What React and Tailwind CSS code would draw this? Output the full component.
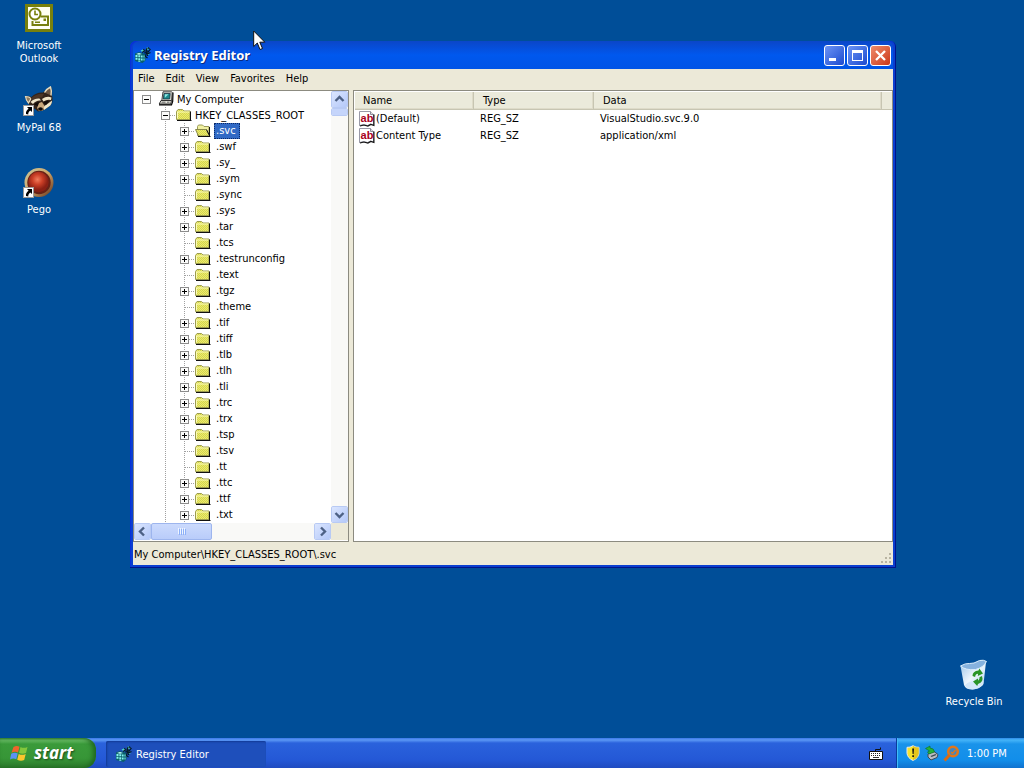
import React from "react";

const tree = [
  [".svc", true], [".swf", true], [".sy_", true], [".sym", true], [".sync", false],
  [".sys", true], [".tar", true], [".tcs", false], [".testrunconfig", true],
  [".text", false], [".tgz", true], [".theme", false], [".tif", true], [".tiff", true],
  [".tlb", true], [".tlh", true], [".tli", true], [".trc", true], [".trx", true],
  [".tsp", true], [".tsv", false], [".tt", false], [".ttc", true], [".ttf", true],
  [".txt", true],
];

const values = [
  ["(Default)", "REG_SZ", "VisualStudio.svc.9.0"],
  ["Content Type", "REG_SZ", "application/xml"],
];

const Guide = ({ d }) => (
  <path d={d} stroke="#a0a0a0" strokeDasharray="1 1" fill="none" shapeRendering="crispEdges" />
);

function TreeCell({ line, box }) {
  return (
    <svg width="19" height="16" viewBox="0 0 19 16" className="shrink-0" aria-hidden="true">
      {line === "through" && <Guide d="M9.5 0V16" />}
      {line === "branch" && <Guide d="M9.5 0V16M10 8.5H19" />}
      {box && (
        <g shapeRendering="crispEdges">
          <rect x="5.5" y="4.5" width="8" height="8" fill="#fbfbfa" stroke="#8c8c8c" />
          <path d="M7 8.5h5" stroke="#000" />
          {box === "plus" && <path d="M9.5 6v5" stroke="#000" />}
        </g>
      )}
    </svg>
  );
}

function Folder({ open }) {
  return (
    <svg width="16" height="16" viewBox="0 0 16 16" className="shrink-0" aria-hidden="true">
      <defs>
        <pattern id="dither" width="2" height="2" patternUnits="userSpaceOnUse">
          <rect width="2" height="2" fill="#eeec6c" />
          <rect width="1" height="1" fill="#d2d450" />
          <rect x="1" y="1" width="1" height="1" fill="#d2d450" />
        </pattern>
      </defs>
      {open ? (
        <>
          <path d="M2.500 12.500v-9l1-1.500h4L9 3.500h5v9z" fill="#f0f0a0" stroke="#9a9a58" />
          <path d="M.5 6.500h10.500l3.500 6.500H3.500z" fill="url(#dither)" stroke="#8a8a4c" />
          <path d="M3 13.500h12.500M14.500 4v9.500M11.500 6.500l3 6" stroke="#111" fill="none" />
        </>
      ) : (
        <>
          <path d="M.5 12.500v-8L2 2.500h4.500L8 4h6v8.500z" fill="url(#dither)" stroke="#9c9c50" />
          <path d="M1.500 11.500V5h12" stroke="#fbfbb8" fill="none" />
          <path d="M1 13.500h14.500M14.500 4.500v9" stroke="#111" fill="none" />
        </>
      )}
    </svg>
  );
}

function Computer() {
  return (
    <svg width="16" height="16" viewBox="0 0 16 16" className="shrink-0" aria-hidden="true">
      <path d="M5 .8h8.500l.8.700-.8 8H3.800z" fill="#d9d9d2" stroke="#444" />
      <path d="M6 2.500h6.200l-.6 5.500H5.200z" fill="#1c8a8c" stroke="#123" strokeWidth=".7" />
      <path d="M6.800 3.300h3.700l-3.600 3.400z" fill="#8fe6e4" />
      <path d="M3 9.500h10.500l-.8 3.500H1.200z" fill="#e2e2da" stroke="#333" />
      <path d="M3.500 11.200h4M9 11.200h2.500" stroke="#666" />
      <path d="M1 13.800h12.500l1.200-3.300.3-9" stroke="#000" fill="none" strokeWidth="1.200" />
    </svg>
  );
}

function RegIcon() {
  return (
    <svg width="16" height="16" viewBox="0 0 16 16" className="shrink-0" aria-hidden="true">
      <path d="M0 6.500L4 5l5 1.500 1.500 1v6L7.500 16 0 14z" fill="#08606c" />
      <path d="M1 7l3-1 3 1-3 .8z" fill="#c8ffff" />
      <g fill="#86f2f0">
        <path d="M.5 8h2v2h-2zM3.300 8.300h2v2h-2zM6 8.600h1.600v2H6zM.5 10.800h2v2h-2zM3.300 11.200h2v2h-2zM6 11.600h1.600v2H6zM3.300 13.800h2v1h-2zM8.500 8.500h1v2h-1zM8.500 11.500h1v2h-1z" />
      </g>
      <path d="M5.500 3.500l3-1.200L10 4 7.500 5.500zM11 1l2.500-.7L14.500 2l-2.500 1.500zM11.500 6l2.500-.500.5 2-2 .8z" fill="#4fd0cc" />
      <path d="M7 5.500L9.500 4l-1-2M10.500 3l3 1.500 2-2.500M12 1l-1 4 1.500 2 3-1.500M9 6l2.500-.5-1 4 2 1.500M13 4.500L12.500 9M13 .5l1.500 1.500" stroke="#041a24" strokeWidth="1.200" fill="none" />
    </svg>
  );
}

function StringIcon() {
  return (
    <span className="relative flex size-4 shrink-0 items-center justify-center">
      <svg width="16" height="16" viewBox="0 0 16 16" className="absolute inset-0" aria-hidden="true">
        <path d="M.5.5h11l3 3v10.500l-3-1-3 1.500-4-1-4 1z" fill="#fff" stroke="#9a9aa8" />
        <path d="M11.500.5v3h3" fill="#ddd" stroke="#8b8b9a" />
        <path d="M14.900 3.500v11l-3-1-3 1.500-4-1-4 1" fill="none" stroke="#111" strokeWidth="1.200" />
      </svg>
      <b className="relative pb-0.5 font-['Liberation_Sans',sans-serif] text-[11px] leading-3 text-[#a8001c]">ab</b>
    </span>
  );
}

const arrows = {
  up: "M4.500 10l4-4 4 4",
  down: "M4.500 7l4 4 4-4",
  left: "M10 4.500l-4 4 4 4",
  right: "M7 4.500l4 4-4 4",
};

function ScrollButton({ dir }) {
  return (
    <button
      aria-label={"Scroll " + dir}
      className="size-[17px] shrink-0 rounded-xs border border-white bg-linear-to-br from-[#dbe6ff] to-[#b4c8f8] outline outline-[#b8caf4] -outline-offset-1"
    >
      <svg width="15" height="15" viewBox="1 1 15 15" aria-hidden="true">
        <path d={arrows[dir]} fill="none" stroke="#4d6185" strokeWidth="2.400" />
      </svg>
    </button>
  );
}

function ShortcutBadge() {
  return (
    <g>
      <rect x=".5" y="20.500" width="10" height="10" fill="#fff" stroke="#999" />
      <path d="M4 22h5v5l-1.700-1.500C6 26.500 5 27.500 5.300 29.500L3 29c-.3-2.500.8-4 2.600-5.300z" fill="#000" />
    </g>
  );
}

function DesktopIcon({ label, place, children }) {
  return (
    <button className={"absolute flex w-[78px] flex-col items-center gap-1 text-center text-[11px] leading-[13px] text-white " + place}>
      <svg width="32" height="32" viewBox="0 0 32 32" aria-hidden="true">{children}</svg>
      <span className="px-2">{label}</span>
    </button>
  );
}

function Desktop() {
  return (
    <>
      <DesktopIcon label="Microsoft Outlook" place="left-0 top-[3px]">
        <rect x="3.500" y="2.500" width="25" height="25" fill="#fffff2" stroke="#78800c" strokeWidth="3" />
        <circle cx="12" cy="11" r="5.500" fill="#fff" stroke="#78800c" strokeWidth="2" />
        <path d="M12 7.500V11.500h3" fill="none" stroke="#78800c" strokeWidth="1.600" />
        <path d="M17.500 13.500H25v8.500H9.500v-4" fill="none" stroke="#78800c" strokeWidth="2" />
        <path d="M20.500 15.500h2.500v2.500h-2.500zM12 18.500h5v1.500h-5z" fill="#78800c" />
      </DesktopIcon>
      <DesktopIcon label="MyPal 68" place="left-0 top-[85px]">
        <path d="M2 11q4-.5 6.500 1Q13 7 20 7.500 23 4 28 1.500q1.500 5 1 9 1.500 6-1.500 10L21 25l-6 1.500L8 21q-4-2-6-10z" fill="#33241a" />
        <path d="M2.500 11.500q4 0 5.500 2L5.500 18q-2.500-2.500-3-6.500z" fill="#8f7a5e" stroke="#e6dcc0" strokeWidth="1.200" />
        <path d="M21.500 7.500q2-3.500 6-5.500 1.500 4 .5 8.500" fill="#6b5541" stroke="#e6dcc0" strokeWidth="1.400" />
        <path d="M8 13.500q6-5.500 13-4.500l-2 3.500q-5-.5-10 3z" fill="#4b3525" />
        <path d="M7.500 17q3.500-4 9-3.500l1.500 2q-5-.5-8 3.500zM19 14q5-3.500 9.500-1.500l-.5 2.500q-4-1-7.500 1.500z" fill="#eee4c8" />
        <path d="M25 18.500l4-3q0 4-3 6L21 25l-1-3z" fill="#efe6ca" />
        <path d="M11 19.500q3-3 6-2l-1 4zM20 17.500q3-2.500 6-1.500l-3 4z" fill="#120b08" />
        <path d="M16 18l3-1 2.500 4-1.500 4.500-4 .5-2-3z" fill="#c9a87c" />
        <ellipse cx="17.500" cy="24" rx="2.400" ry="1.800" fill="#0c0808" />
        <ShortcutBadge />
      </DesktopIcon>
      <DesktopIcon label="Pego" place="left-0 top-[167px]">
        <defs>
          <radialGradient id="gem" cx="45%" cy="38%">
            <stop offset="0" stopColor="#f07c5c" />
            <stop offset=".5" stopColor="#cb3f26" />
            <stop offset="1" stopColor="#8a2014" />
          </radialGradient>
          <linearGradient id="ring" x1="0" y1="0" x2="1" y2="1">
            <stop offset="0" stopColor="#c9c79c" />
            <stop offset=".5" stopColor="#d0a566" />
            <stop offset="1" stopColor="#5b2a17" />
          </linearGradient>
        </defs>
        <circle cx="16" cy="15.500" r="14.500" fill="url(#ring)" />
        <circle cx="16" cy="15.500" r="11.700" fill="#672116" />
        <circle cx="15.500" cy="15" r="10.200" fill="url(#gem)" />
        <ShortcutBadge />
      </DesktopIcon>
      <DesktopIcon label="Recycle Bin" place="right-[11px] bottom-[30px]">
        <defs>
          <linearGradient id="bin" x1="0" y1="0" x2="1" y2="1">
            <stop offset="0" stopColor="#9cc4e8" />
            <stop offset=".5" stopColor="#eef6fd" />
            <stop offset="1" stopColor="#a9cdec" />
          </linearGradient>
        </defs>
        <path d="M2.500 7q6 2 12-1t13.500-3l-2.500 22q-4 5-11 5.500-7 0-8.500-4.500z" fill="url(#bin)" />
        <path d="M2.500 7q5-3 9-2.500t10-3q4-1 7 1-3 6-11 8-10 1-15-3.500z" fill="#86b2de" stroke="#dceefc" />
        <path d="M7 26q5-5 18.500-4l-.5 4q-4 4-10.500 4.500Q8 30 7 26z" fill="#d4e7f8" />
        <path d="M14.500 17q0-5 6-5.500l.8-2 3.700 5-5.200 2.500.3-2.200q-2.600 0-3 3.200zM24 17q2 6-4 8l-.8 2-4.200-4.500 5-3v2.200q2-1 1.500-3.500z" fill="#2a9426" />
      </DesktopIcon>
    </>
  );
}

const caption =
  "flex size-[21px] items-center justify-center rounded-[3px] border border-white bg-linear-to-br ";

function TitleBar() {
  return (
    <header className="flex h-7 items-center justify-between rounded-t-md bg-linear-to-b from-[#0a46c8] via-[#0058ee] to-[#0054e6] pr-0.5 pl-0.5">
      <div className="flex items-center gap-[3px]">
        <RegIcon />
        <h1 className="font-['Noto_Sans',sans-serif] text-[13px] leading-5 font-bold text-white text-shadow-[1px_1px_#0a2a80]">
          Registry Editor
        </h1>
      </div>
      <div className="flex gap-0.5">
        <button aria-label="Minimize" className={caption + "from-[#6d93f5] to-[#1c49cf]"}>
          <svg width="19" height="19" aria-hidden="true"><path d="M4 12h7v3H4z" fill="#fff" /></svg>
        </button>
        <button aria-label="Maximize" className={caption + "from-[#6d93f5] to-[#1c49cf]"}>
          <svg width="19" height="19" aria-hidden="true"><path d="M4 4h11v11H4zM5 7v7h9V7z" fill="#fff" fillRule="evenodd" /></svg>
        </button>
        <button aria-label="Close" className={caption + "from-[#ee8a6a] to-[#cb3412]"}>
          <svg width="19" height="19" aria-hidden="true"><path d="M5 5l9 9M14 5l-9 9" stroke="#fff" strokeWidth="2.300" /></svg>
        </button>
      </div>
    </header>
  );
}

function TreePane() {
  return (
    <div className="flex w-[216px] shrink-0 flex-col border border-[#8c8b80] bg-white pb-px">
      <div className="flex">
        <ul role="tree" aria-label="Registry keys" className="min-w-0 flex-1 overflow-hidden pl-[3px]">
          <li role="treeitem" className="flex h-4 items-center">
            <TreeCell box="minus" />
            <span className="flex items-center gap-0.5 pl-0.5">
              <Computer />
              <span className="px-px">My Computer</span>
            </span>
          </li>
          <li role="treeitem" className="flex h-4 items-center">
            <TreeCell />
            <TreeCell line="branch" box="minus" />
            <span className="flex items-center gap-0.5 pl-px">
              <Folder />
              <span className="px-px">HKEY_CLASSES_ROOT</span>
            </span>
          </li>
          {tree.map(([name, more], i) => (
            <li role="treeitem" aria-selected={i === 0} key={name} className="flex h-4 items-center">
              <TreeCell />
              <TreeCell line="through" />
              <TreeCell line="branch" box={more ? "plus" : null} />
              <span className="flex items-center gap-[3px] pl-px">
                <Folder open={i === 0} />
                <span
                  className={
                    i === 0
                      ? "bg-[#316ac5] pr-1 pl-0.5 leading-4 text-white outline-1 outline-dotted outline-[#0a2a6a] -outline-offset-1"
                      : "pr-1 pl-0.5 leading-4"
                  }
                >
                  {name}
                </span>
              </span>
            </li>
          ))}
        </ul>
        <div className="flex w-[17px] flex-col bg-[#f9f9f7]">
          <ScrollButton dir="up" />
          <div className="h-2 rounded-xs border border-white bg-[#c5d5fb] outline outline-[#b8caf4] -outline-offset-1" />
          <div className="flex-1" />
          <ScrollButton dir="down" />
        </div>
      </div>
      <div className="flex h-[17px] bg-[#f9f9f7]">
        <ScrollButton dir="left" />
        <div className="flex w-[61px] items-center justify-center rounded-xs border border-[#9db5ee] bg-linear-to-b from-[#cbdafd] to-[#b9ccfa]">
          <svg width="10" height="7" aria-hidden="true">
            <path d="M1.500 0v6M3.500 0v6M5.500 0v6M7.500 0v6" stroke="#eef4ff" />
            <path d="M2.500 1v6M4.500 1v6M6.500 1v6M8.500 1v6" stroke="#8cb0f8" />
          </svg>
        </div>
        <div className="flex-1" />
        <ScrollButton dir="right" />
        <div className="w-[17px] bg-[#ece9d8]" />
      </div>
    </div>
  );
}

function ValuePane() {
  const th = "border-r border-b border-[#c7c5b2] pl-2 text-left font-normal shadow-[inset_-1px_-1px_#dedbc9]";
  return (
    <div className="min-w-0 flex-1 border border-[#8c8b80] bg-white pt-px pl-px">
      <table className="w-full table-fixed border-separate border-spacing-0">
        <colgroup>
          <col className="w-[119px]" />
          <col className="w-[120px]" />
          <col className="w-[288px]" />
          <col />
        </colgroup>
        <thead>
          <tr className="h-[18px] bg-[#ebeadb]">
            <th className={th}>Name</th>
            <th className={th + " pl-[9px]"}>Type</th>
            <th className={th + " pl-[9px]"}>Data</th>
            <td className="border-b border-[#c7c5b2] p-0" />
          </tr>
        </thead>
        <tbody>
          {values.map(([name, type, data]) => (
            <tr key={name} className="h-[17px]">
              <td className="p-0 pl-1">
                <span className="flex items-center gap-px whitespace-nowrap"><StringIcon />{name}</span>
              </td>
              <td className="p-0 pl-[6px]">{type}</td>
              <td className="p-0 pl-[6px]">{data}</td>
              <td />
            </tr>
          ))}
        </tbody>
      </table>
    </div>
  );
}

function RegistryWindow() {
  return (
    <section
      aria-label="Registry Editor"
      className="absolute top-[41px] right-[128px] left-[130px] flex flex-col rounded-t-md bg-[#0b3fd0] px-[3px] pb-[3px] shadow-[inset_-1px_-1px_#00138c,inset_1px_1px_#0831d9]"
    >
      <TitleBar />
      <nav className="flex h-5 items-center bg-[#ece9d8] leading-4">
        {["File", "Edit", "View", "Favorites", "Help"].map((m) => (
          <button key={m} className="pr-[6px] pl-[5px]">{m}</button>
        ))}
      </nav>
      <div className="flex gap-1 bg-[#ece9d8] pt-px">
        <TreePane />
        <ValuePane />
      </div>
      <footer className="flex h-[23px] items-center justify-between bg-[#ece9d8] pl-px">
        <span className="pt-0.5">My Computer\HKEY_CLASSES_ROOT\.svc</span>
        <svg width="13" height="13" className="self-end" aria-hidden="true">
          <path d="M9 1h2v2H9zM5 5h2v2H5zM9 5h2v2H9zM1 9h2v2H1zM5 9h2v2H5zM9 9h2v2H9z" fill="#b8b4a2" />
        </svg>
      </footer>
    </section>
  );
}

function Taskbar() {
  return (
    <footer className="relative flex h-[30px] shrink-0 bg-[linear-gradient(#3a78e8_0,#5b98f5_2px,#2a62dc_5px,#2458d6_22px,#1f4bc0_100%)] text-white">
      <button className="flex w-24 items-center gap-1 rounded-r-xl bg-[linear-gradient(#3f8f3f_0,#6cc068_2px,#3a9a3a_6px,#379637_20px,#2b7a2b_100%)] pl-[10px] shadow-[inset_-3px_0_5px_#1f661f]">
        <svg width="20" height="20" viewBox="0 0 20 20" aria-hidden="true">
          <path d="M3.500 4q3-2 6-.3L8 9.500q-3-1.500-6.500.2z" fill="#f0642c" />
          <path d="M10.500 4q3 1.700 7 0L16 10q-3.500 1.500-7 0z" fill="#83c73c" />
          <path d="M1.200 10.800q3.300-1.800 6.500-.3L6.300 16.200q-3-1.400-6.300.2z" fill="#5b92f4" />
          <path d="M8.700 11q3.500 1.700 7 0l-1.500 6q-3.500 1.500-7-.3z" fill="#fbc62d" />
        </svg>
        <span className="font-['Noto_Sans',sans-serif] text-[17px] leading-5 font-bold italic text-shadow-[1px_1px_2px_#1a4a1a]">start</span>
      </button>
      <button className="mt-[3px] mb-px ml-[10px] flex w-40 items-center gap-1 rounded-xs bg-[#1e4fbb] pl-[10px] text-[11px] shadow-[inset_1px_1px_2px_#123a94]">
        <RegIcon />
        <span>Registry Editor</span>
      </button>
      <div className="flex flex-1 items-center justify-end pr-[13px]">
        <svg width="14" height="14" viewBox="0 0 14 14" aria-hidden="true">
          <path d="M6.500 5V3.500h5V1.500" stroke="#111" fill="none" />
          <path d="M.5 5.500h13v8H.5z" fill="#fff" stroke="#111" />
          <path d="M2 7.500h10M2 9.500h10" stroke="#222" strokeDasharray="1 1" />
          <path d="M4 11.500h6" stroke="#333" />
        </svg>
      </div>
      <div className="flex w-32 items-center gap-[3px] border-l border-[#0b3b9c] bg-[linear-gradient(#2f8ae8_0,#45b4f8_2px,#1a93ea_6px,#128eea_22px,#1072cf_100%)] pl-2 text-[11px] shadow-[inset_1px_0_#40bdf8]">
        <svg width="16" height="16" viewBox="0 0 16 16" aria-hidden="true">
          <path d="M8 .7q3 2 6 1.600v6Q13.500 13 8 15.500 2.500 13 2 8.300v-6Q5 2.700 8 .7z" fill="#f7e32c" stroke="#e9e9e9" />
          <path d="M8 .7q3 2 6 1.600v6Q13.500 13 8 15.500z" fill="#d8b010" opacity=".6" />
          <path d="M7.200 3.500h1.800L8.600 9H7.600zM7.300 10.200h1.600v1.800H7.300z" fill="#111" />
        </svg>
        <svg width="16" height="16" viewBox="0 0 16 16" aria-hidden="true">
          <path d="M4 9l6-2.500 4 3-1 3-6 2.500-3-3z" fill="#b9bdc2" stroke="#3e4a55" />
          <path d="M6.500 11l5-2 1 1-5 2z" fill="#3b4650" />
          <path d="M1.500 3.500L6 1v2q4 0 4.500 4L5 9 3.500 7l2-1z" fill="#25b33a" stroke="#0b6b23" strokeWidth=".6" />
        </svg>
        <svg width="17" height="17" viewBox="0 0 17 17" aria-hidden="true">
          <circle cx="10" cy="6.500" r="4.800" fill="#3f86c0" stroke="#e0771a" strokeWidth="2.500" />
          <path d="M6.500 10L1.500 15.500" stroke="#d96a12" strokeWidth="3" />
          <path d="M8 7l1.500 1.500L12.500 5" stroke="#e0771a" fill="none" strokeWidth="1.300" />
        </svg>
        <time className="pl-1">1:00 PM</time>
      </div>
    </footer>
  );
}

export default function App() {
  return (
    <div className="flex h-screen flex-col overflow-hidden bg-[#004e98] font-['DejaVu_Sans_Condensed','DejaVu_Sans',sans-serif] text-[11px] leading-[13px] text-black">
      <main className="relative min-h-0 flex-1">
        <Desktop />
        <RegistryWindow />
        <svg width="13" height="21" viewBox="0 0 13 21" className="absolute top-[30px] left-[253px]" aria-hidden="true">
          <path d="M.7 1v15.500l3.600-3.500 2.700 6.500 2.500-1-2.700-6.300h5z" fill="#fff" stroke="#111" />
        </svg>
      </main>
      <Taskbar />
    </div>
  );
}
